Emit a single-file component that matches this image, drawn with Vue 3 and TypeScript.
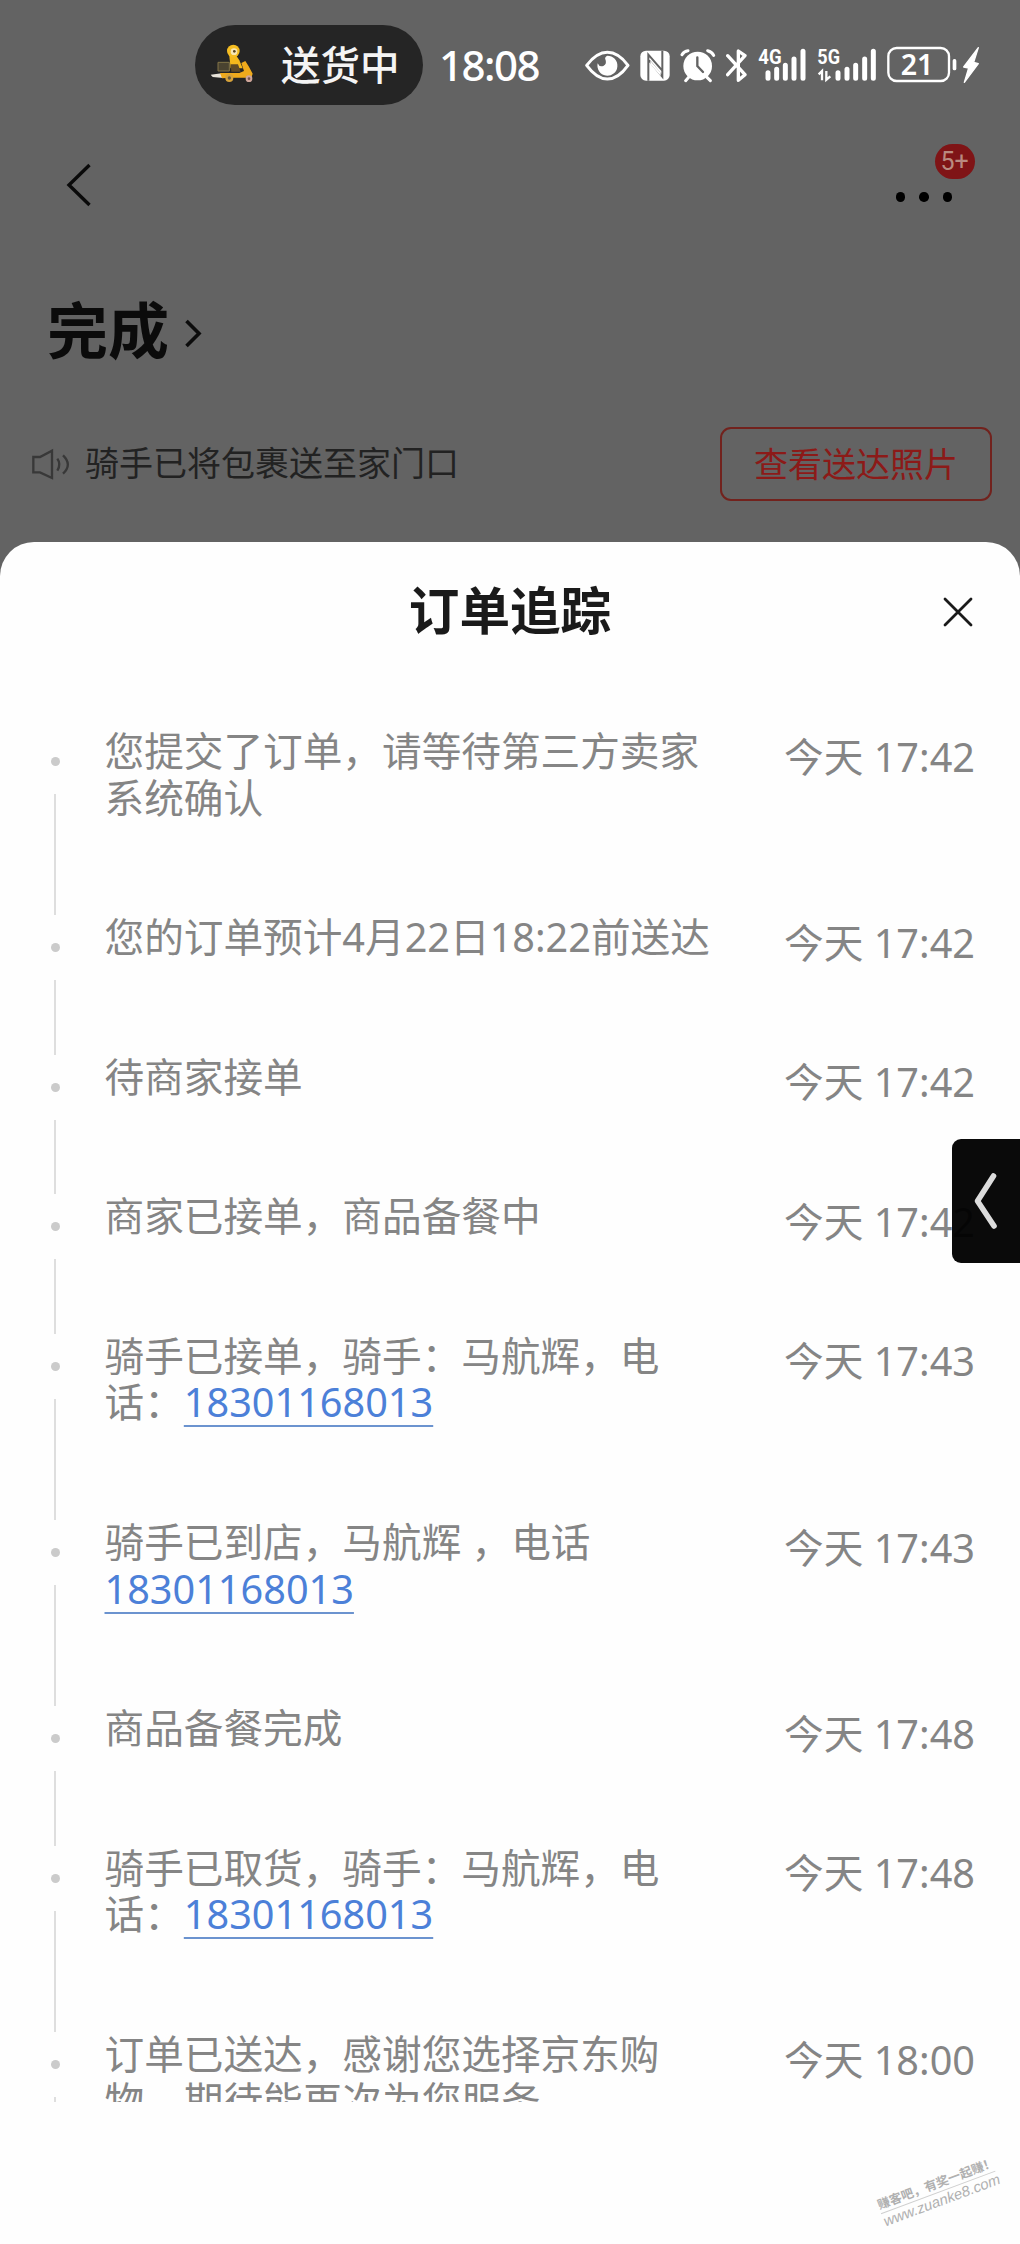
<script setup lang="ts">
interface TrackEvent {
  text: string
  phone?: string
  time: string
  tall?: boolean
}

const phone = '18301168013'

const events: TrackEvent[] = [
  { text: '您提交了订单，请等待第三方卖家系统确认', time: '今天 17:42', tall: true },
  { text: '您的订单预计4月22日18:22前送达', time: '今天 17:42' },
  { text: '待商家接单', time: '今天 17:42' },
  { text: '商家已接单，商品备餐中', time: '今天 17:42' },
  { text: '骑手已接单，骑手：马航辉，电话：', phone, time: '今天 17:43', tall: true },
  { text: '骑手已到店，马航辉 ，电话', phone, time: '今天 17:43', tall: true },
  { text: '商品备餐完成', time: '今天 17:48' },
  { text: '骑手已取货，骑手：马航辉，电话：', phone, time: '今天 17:48', tall: true },
  { text: '订单已送达，感谢您选择京东购物，期待能再次为您服务', time: '今天 18:00', tall: true },
]
</script>

<template>
  <div class="screen">
    <div class="status">
      <div class="pill">
        <svg class="rider" viewBox="88 100 138 120" width="46" height="40">
          <path d="M90 195 L128 190 L128 205 L96 202Z" fill="#e8e4da" />
          <path d="M146 140 Q150 132 164 134 L176 152 L186 176 L150 176Z" fill="#f4b81c" />
          <circle cx="158" cy="124" r="19" fill="#f5bd22" />
          <circle cx="160" cy="126" r="10" fill="#f7e7b4" />
          <circle cx="161" cy="125" r="4" fill="#5b4520" />
          <path d="M112 158 H146 V184 H112Z" fill="#4a4330" stroke="#837548" stroke-width="3" />
          <path d="M150 164 L172 164 L180 186 L152 186Z" fill="#5f4a26" />
          <path d="M118 190 H176 L190 184 L182 160 L194 154 L204 170 L216 192 L212 204 H150 L124 206Z" fill="#efaa1c" />
          <circle cx="146" cy="205" r="12" fill="#d6a23a" />
          <circle cx="146" cy="205" r="5" fill="#6a5a3a" />
          <circle cx="205" cy="207" r="10" fill="#cfa59a" />
          <circle cx="205" cy="207" r="4" fill="#77564e" />
        </svg>
        <span class="pill-text">送货中</span>
      </div>
      <span class="clock">18:08</span>
      <div class="sys">
        <svg viewBox="45 75 135 120" width="45" height="40">
          <path d="M50 136 Q80 97 112 97 Q145 97 174 136 Q145 177 112 177 Q80 177 50 136Z" fill="none" stroke="#fff" stroke-width="9" stroke-linejoin="round" />
          <path d="M112 107 A30 30 0 1 1 83 130 Q88 142 100 138 Q112 132 106 118 Q103 112 112 107Z" fill="#fff" />
        </svg>
        <svg viewBox="210 75 90 120" width="30" height="40">
          <rect x="211" y="92" width="88" height="90" rx="17" fill="#fff" />
          <path d="M235 182 V104 L277 152 M277 92 V170 L237 121" fill="none" stroke="#636363" stroke-width="6" />
          <path d="M241 122 L272 158 V168 L241 132Z" fill="#fff" />
        </svg>
        <svg viewBox="330 75 108 120" width="36" height="40">
          <circle cx="383" cy="138" r="43" fill="#fff" />
          <path d="M336 104 Q342 93 354 92 M413 92 Q426 95 431 106 M356 172 L347 182 M411 172 L421 182" stroke="#fff" stroke-width="9" stroke-linecap="round" fill="none" />
          <path d="M382 112 V138 L399 156" stroke="#636363" stroke-width="7" fill="none" stroke-linecap="round" />
        </svg>
        <svg viewBox="468 75 66 120" width="22" height="40">
          <path d="M473 107 L525 164 L505 181 V93 L525 107 L473 164" fill="none" stroke="#fff" stroke-width="10" stroke-linecap="round" stroke-linejoin="round" />
        </svg>
        <svg viewBox="564 75 147 120" width="49" height="40">
          <text x="565" y="132" textLength="70" lengthAdjust="spacingAndGlyphs" class="net">4G</text>
          <path d="M594 158 V175 M620 148 V175 M646 136 V175 M672 117 V175 M699 94 V175" stroke="#fff" stroke-width="15" stroke-linecap="round" />
        </svg>
        <svg viewBox="739 75 180 120" width="60" height="40">
          <text x="740" y="132" textLength="68" lengthAdjust="spacingAndGlyphs" class="net">5G</text>
          <path d="M744 163 L754 153 V181 M767 153 V179 L779 169" stroke="#fff" stroke-width="7" fill="none" />
          <path d="M802 158 V175 M829 148 V175 M855 136 V175 M882 117 V175 M908 94 V175" stroke="#fff" stroke-width="15" stroke-linecap="round" />
        </svg>
        <svg viewBox="949 75 213 120" width="71" height="40">
          <rect x="953" y="84" width="182" height="99" rx="25" fill="none" stroke="#fff" stroke-width="7" />
          <rect x="1146" y="117" width="11" height="34" rx="5" fill="#fff" />
          <text x="990" y="166" textLength="98" lengthAdjust="spacingAndGlyphs" class="level">21</text>
        </svg>
        <svg viewBox="1173 75 54 120" width="18" height="40">
          <path d="M1222 83 L1178 141 L1193 144 L1180 187 L1222 131 L1208 127Z" fill="#fff" stroke="#fff" stroke-width="4" stroke-linejoin="round" />
        </svg>
      </div>
    </div>

    <div class="nav">
      <svg class="back" viewBox="0 0 28 44" width="28" height="44">
        <path d="M24.500 2 L4 22 L24.500 42" fill="none" stroke="#0a0a0a" stroke-width="3.400" />
      </svg>
      <div class="more">
        <i></i><i></i><i></i>
        <span class="badge">5+</span>
      </div>
    </div>

    <div class="state">
      <span>完成</span>
      <svg viewBox="0 0 18 30" width="18" height="30">
        <path d="M2.500 3 L15 15.500 L2.500 28" fill="none" stroke="#0c0c0c" stroke-width="3.600" />
      </svg>
    </div>

    <div class="notice">
      <svg viewBox="96 145 114 96" width="38" height="32">
        <path d="M100 172 H120 L156 153 V235 L120 218 H100Z" fill="none" stroke="#383838" stroke-width="7" />
        <path d="M172 177 Q184 194 172 213 M189 167 Q218 194 189 222" fill="none" stroke="#383838" stroke-width="7" />
      </svg>
      <span class="notice-text">骑手已将包裹送至家门口</span>
      <button class="photo">查看送达照片</button>
    </div>

    <section class="sheet">
      <header>
        <h1>订单追踪</h1>
        <svg class="close" viewBox="0 0 30 30" width="30" height="30">
          <path d="M2 2 L28 28 M28 2 L2 28" stroke="#1a1a1a" stroke-width="2.800" stroke-linecap="round" />
        </svg>
      </header>
      <ul class="track">
        <li v-for="(e, i) in events" :key="i" :class="{ tall: e.tall }">
          <div class="rail"><b></b><s></s></div>
          <p>{{ e.text }}<a v-if="e.phone">{{ e.phone }}</a></p>
          <time>{{ e.time }}</time>
        </li>
      </ul>
    </section>

    <div class="side-tab">
      <svg viewBox="0 0 28 60" width="28" height="60">
        <path d="M21.500 5 L5.500 30 L22 55" fill="none" stroke="#dcdcdc" stroke-width="5.600" stroke-linecap="round" stroke-linejoin="round" />
      </svg>
    </div>

    <div class="mark">
      <span>赚客吧，有奖一起赚！</span>
      <em>www.zuanke8.com</em>
    </div>
  </div>
</template>

<style>
body {
  margin: 0;
  background: #fff;
}
</style>

<style scoped>
.screen {
  position: relative;
  width: 1020px;
  height: 2244px;
  overflow: hidden;
  display: flex;
  flex-direction: column;
  background: #636363;
  font-family: 'Noto Sans', 'Noto Sans CJK SC', sans-serif;
}
.status {
  height: 80px;
  padding: 25px 0 0 195px;
  display: flex;
  align-items: center;
}
.pill {
  box-sizing: border-box;
  width: 228px;
  height: 80px;
  border-radius: 40px;
  background: #252525;
  display: flex;
  align-items: center;
  padding-left: 15px;
}
.rider {
  margin-top: -4px;
}
.pill-text {
  margin: -4px 0 0 25px;
  font: 500 39.500px/60px 'Noto Sans CJK SC', sans-serif;
  color: #f4f4f4;
}
.clock {
  width: 148px;
  padding-left: 16px;
  box-sizing: border-box;
  font-size: 42px;
  line-height: 60px;
  font-weight: 500;
  letter-spacing: -1.500px;
  color: #fff;
}
.sys {
  display: flex;
  align-items: center;
  margin-left: 14px;
}
.sys svg {
  margin-right: 10px;
  flex: none;
}
.sys svg:nth-child(7) {
  margin-right: 4px;
}
.net {
  font: 700 60px Roboto, sans-serif;
  fill: #fff;
}
.level {
  font: 600 88px 'Noto Sans', sans-serif;
  fill: #fff;
}
.nav {
  height: 110px;
  margin-top: 25px;
  padding: 0 68px 0 65px;
  display: flex;
  align-items: center;
  justify-content: space-between;
}
.more {
  position: relative;
  display: flex;
  gap: 14px;
  margin-top: 24px;
}
.more i {
  width: 9.500px;
  height: 9.500px;
  border-radius: 50%;
  background: #000;
}
.badge {
  position: absolute;
  left: 39px;
  top: -48px;
  width: 40px;
  height: 35px;
  border-radius: 17.500px;
  background: #7f1416;
  color: #b98a80;
  font: 400 25px/35px Roboto, sans-serif;
  text-align: center;
}
.state {
  height: 92px;
  margin-top: 45px;
  padding-left: 47px;
  display: flex;
  align-items: center;
  color: #0b0b0b;
  font: 700 61px/92px 'Noto Sans CJK SC', sans-serif;
}
.state span {
  margin-top: -6px;
}
.state svg {
  margin: 3px 0 0 15px;
}
.notice {
  height: 74px;
  margin-top: 50px;
  padding: 0 28px 0 32px;
  display: flex;
  align-items: center;
}
.notice-text {
  margin: -5px 0 0 15px;
  font: 400 34px/50px 'Noto Sans CJK SC', sans-serif;
  color: #222;
}
.photo {
  box-sizing: border-box;
  width: 272px;
  height: 74px;
  margin-left: auto;
  padding: 0 0 3px;
  border: 2px solid #72221d;
  border-radius: 11px;
  background: none;
  color: #8c1a18;
  font: 400 34px/66px 'Noto Sans CJK SC', sans-serif;
}
.sheet {
  margin-top: 41px;
  flex: 1;
  min-height: 0;
  border-radius: 34px 34px 0 0;
  background: #fefefe;
}
.sheet header {
  position: relative;
  height: 140px;
  display: flex;
  justify-content: center;
}
h1 {
  margin: 0;
  font: 700 50.600px/133px 'Noto Sans CJK SC', sans-serif;
  color: #1a1a1a;
}
.close {
  position: absolute;
  right: 47px;
  top: 55px;
}
.track {
  list-style: none;
  margin: 0;
  padding: 46px 0 0;
  height: 1374px;
  overflow: hidden;
}
li {
  display: flex;
  height: 139.600px;
  color: #858585;
  font-size: 39.650px;
  line-height: 46.500px;
}
li.tall {
  height: 186.200px;
}
.rail {
  width: 9px;
  margin-left: 50.500px;
  display: flex;
  flex-direction: column;
  align-items: center;
}
.rail b {
  width: 9px;
  height: 9px;
  margin-top: 29px;
  border-radius: 50%;
  background: #cbcbcb;
}
.rail s {
  flex: 1;
  width: 2px;
  margin: 28px 0 -1px;
  background: #dedede;
}
p {
  width: 622px;
  margin: 0 0 0 45px;
}
a {
  color: #4c80d8;
  text-decoration: underline 1.500px #6b93cf;
  text-underline-offset: 8px;
  text-decoration-skip-ink: none;
}
time {
  margin: 5.500px 45px 0 auto;
  white-space: nowrap;
}
.side-tab {
  position: absolute;
  right: 0;
  top: 1139px;
  width: 68px;
  height: 124px;
  border-radius: 9px 0 0 9px;
  background: rgba(0, 0, 0, 0.96);
  display: flex;
  align-items: center;
}
.side-tab svg {
  margin-left: 20px;
}
.mark {
  position: absolute;
  left: 877px;
  top: 2174px;
  width: 122px;
  transform: rotate(-20.500deg);
  color: #b0b0b0;
  display: flex;
  flex-direction: column;
}
.mark span {
  font: 700 12.500px/18px 'Noto Sans CJK SC', sans-serif;
  border-bottom: 1px solid #cfcfcf;
  white-space: nowrap;
}
.mark em {
  font: italic 400 14.800px/17px 'Liberation Sans', sans-serif;
  white-space: nowrap;
}
</style>
